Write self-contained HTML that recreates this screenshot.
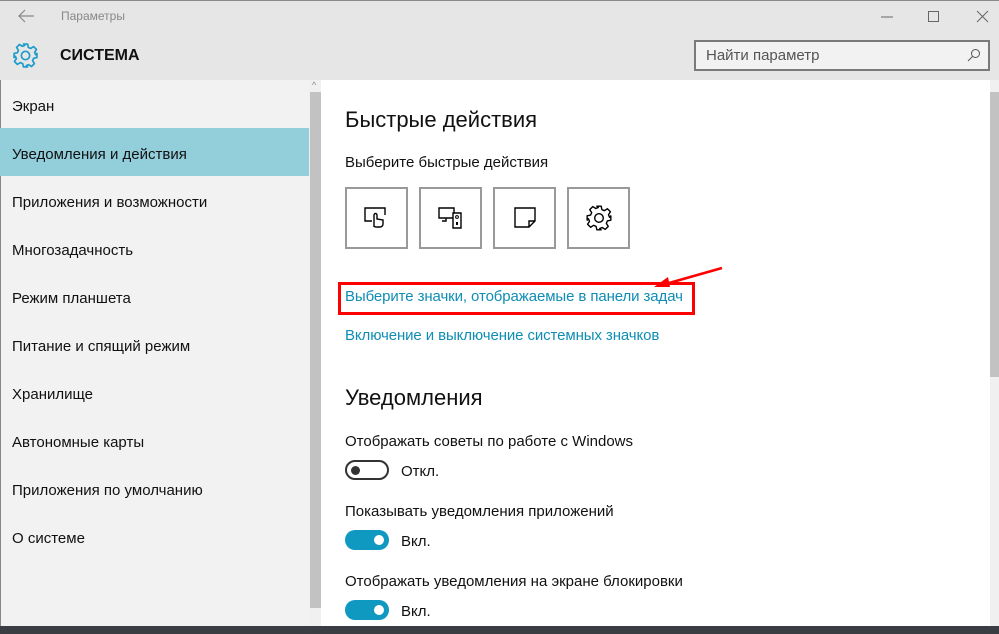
<!DOCTYPE html>
<html><head><meta charset="utf-8"><style>
*{margin:0;padding:0;box-sizing:border-box}
body{width:999px;height:634px;overflow:hidden;position:relative;background:#fff;font-family:"Liberation Sans","Noto Sans CJK SC",sans-serif;color:#000}
.a{position:absolute;white-space:nowrap}
.nav{position:absolute;left:0;width:309px;height:48px;font-size:15px;line-height:48px;padding-left:12px;padding-top:3px;color:#111}
.tile{position:absolute;top:187px;width:63px;height:62px;border:2px solid #999;display:flex;align-items:center;justify-content:center}
.t{font-size:15px;color:#111}
.lnk{font-size:15px;color:#0f8db5;letter-spacing:-0.1px}
.tog{position:absolute;width:44px;height:20px;border-radius:10px}
</style></head><body>
<div class="a" style="left:0;top:0;width:999px;height:80px;background:#e6e6e6;border-top:1px solid #888"></div>
<div class="a" style="left:0;top:80px;width:309px;height:546px;background:#f2f2f2;border-left:1px solid #888"></div>
<svg class="a" style="left:17px;top:9px" width="18" height="14"><path d="M17 7H2M8 1L2 7l6 6" stroke="#888" stroke-width="1.2" fill="none"/></svg>
<div class="a" style="left:61px;top:9px;font-size:12px;color:#888">Параметры</div>
<svg class="a" style="left:880px;top:10px" width="110" height="14"><path d="M1 7h12" stroke="#666"/><path d="M48.5 1.5h10v10h-10z" stroke="#666" fill="none"/><path d="M97 1l11 11M108 1L97 12" stroke="#666"/></svg>
<svg class="a" style="left:12px;top:42px" width="27" height="27" viewBox="0 0 26 26"><path d="M11 2h4l.7 3.2 2.3 1 2.8-1.8 2.8 2.8-1.8 2.8 1 2.3L24 11v4l-3.2.7-1 2.3 1.8 2.8-2.8 2.8-2.8-1.8-2.3 1L15 24h-4l-.7-3.2-2.3-1-2.8 1.8-2.8-2.8 1.8-2.8-1-2.3L2 15v-4l3.2-.7 1-2.3-1.8-2.8 2.8-2.8 2.8 1.8 2.3-1z" fill="none" stroke="#1a9bc9" stroke-width="1.6" stroke-linejoin="round"/><circle cx="13" cy="13" r="4" fill="none" stroke="#1a9bc9" stroke-width="1.6"/></svg>
<div class="a" style="left:60px;top:47px;font-size:16px;font-weight:bold;color:#111">СИСТЕМА</div>
<div class="a" style="left:694px;top:40px;width:296px;height:31px;border:2px solid #7a7a7a;background:#f2f2f2"></div>
<div class="a" style="left:706px;top:47px;font-size:15px;color:#555">Найти параметр</div>
<svg class="a" style="left:967px;top:48px" width="14" height="14"><circle cx="8.5" cy="5.5" r="4" fill="none" stroke="#555"/><path d="M5.5 8.5L1 13" stroke="#555"/></svg>

<div class="nav" style="top:80px">Экран</div>
<div class="nav" style="top:128px;background:#93cedb">Уведомления и действия</div>
<div class="nav" style="top:176px">Приложения и возможности</div>
<div class="nav" style="top:224px">Многозадачность</div>
<div class="nav" style="top:272px">Режим планшета</div>
<div class="nav" style="top:320px">Питание и спящий режим</div>
<div class="nav" style="top:368px">Хранилище</div>
<div class="nav" style="top:416px">Автономные карты</div>
<div class="nav" style="top:464px">Приложения по умолчанию</div>
<div class="nav" style="top:512px">О системе</div>
<div class="a" style="left:309px;top:80px;width:12px;height:546px;background:#f0f0f0"></div>
<div class="a" style="left:310px;top:92px;width:11px;height:516px;background:#c2c2c2"></div>
<div class="a" style="left:312px;top:80px;font-size:9px;color:#888">^</div>
<div class="a" style="left:990px;top:80px;width:9px;height:546px;background:#f0f0f0"></div>
<div class="a" style="left:990px;top:92px;width:9px;height:285px;background:#c2c2c2"></div>

<div class="a" style="left:345px;top:107px;font-size:22px;color:#111">Быстрые действия</div>
<div class="a t" style="left:345px;top:154px">Выберите быстрые действия</div>
<div class="tile" style="left:345px"><svg width="28" height="26"><path d="M9 16H2V3h20v7" fill="none" stroke="#000" stroke-width="1.4"/><path d="M11 22V10a1.5 1.5 0 013 0v4l6 1v4a3 3 0 01-3 3h-3a3 3 0 01-3-1z" fill="#fff" stroke="#000" stroke-width="1.4"/></svg></div>
<div class="tile" style="left:419px"><svg width="28" height="26"><path d="M2 3h15v10H2zM9 13v3H5" fill="none" stroke="#000" stroke-width="1.4"/><path d="M16 8h8v15h-8z" fill="#fff" stroke="#000" stroke-width="1.4"/><circle cx="20" cy="12" r="1.4" fill="none" stroke="#000"/><rect x="19" y="17" width="2" height="3" fill="#000"/></svg></div>
<div class="tile" style="left:493px"><svg width="28" height="26"><path d="M4 3h20v13l-6 6H4z M24 16h-6v6" fill="none" stroke="#000" stroke-width="1.4"/></svg></div>
<div class="tile" style="left:567px"><svg width="28" height="28" viewBox="0 0 26 26"><path d="M11 2h4l.7 3.2 2.3 1 2.8-1.8 2.8 2.8-1.8 2.8 1 2.3L24 11v4l-3.2.7-1 2.3 1.8 2.8-2.8 2.8-2.8-1.8-2.3 1L15 24h-4l-.7-3.2-2.3-1-2.8 1.8-2.8-2.8 1.8-2.8-1-2.3L2 15v-4l3.2-.7 1-2.3-1.8-2.8 2.8-2.8 2.8 1.8 2.3-1z" fill="none" stroke="#000" stroke-width="1.3" stroke-linejoin="round"/><circle cx="13" cy="13" r="4" fill="none" stroke="#000" stroke-width="1.3"/></svg></div>

<div class="a lnk" style="left:345px;top:288px">Выберите значки, отображаемые в панели задач</div>
<div class="a" style="left:338px;top:282px;width:357px;height:33px;border:3px solid #ff0000"></div>
<svg class="a" style="left:650px;top:262px" width="80" height="30"><path d="M72 6L12 23" stroke="#ff0000" stroke-width="2.5"/><path d="M4 25l14-10 2 10z" fill="#ff0000"/></svg>
<div class="a lnk" style="left:345px;top:327px">Включение и выключение системных значков</div>

<div class="a" style="left:345px;top:385px;font-size:22px;color:#111">Уведомления</div>
<div class="a t" style="left:345px;top:433px">Отображать советы по работе с Windows</div>
<div class="tog" style="left:345px;top:460px;border:2px solid #333;background:#fff"><div style="position:absolute;left:4px;top:4px;width:9px;height:9px;border-radius:50%;background:#333"></div></div>
<div class="a t" style="left:401px;top:463px">Откл.</div>
<div class="a t" style="left:345px;top:503px">Показывать уведомления приложений</div>
<div class="tog" style="left:345px;top:530px;background:#0f98c0"><div style="position:absolute;left:29px;top:5px;width:10px;height:10px;border-radius:50%;background:#fff"></div></div>
<div class="a t" style="left:401px;top:533px">Вкл.</div>
<div class="a t" style="left:345px;top:573px">Отображать уведомления на экране блокировки</div>
<div class="tog" style="left:345px;top:600px;background:#0f98c0"><div style="position:absolute;left:29px;top:5px;width:10px;height:10px;border-radius:50%;background:#fff"></div></div>
<div class="a t" style="left:401px;top:603px">Вкл.</div>

<div class="a" style="left:0;top:626px;width:999px;height:8px;background:#3a3d42"></div>
</body></html>
